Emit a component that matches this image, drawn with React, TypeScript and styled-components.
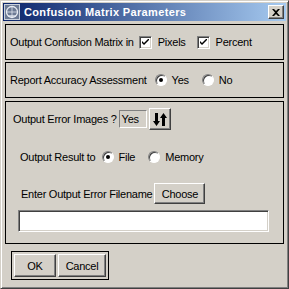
import styled, { createGlobalStyle } from 'styled-components'

const GlobalStyle = createGlobalStyle`
  html, body {
    margin: 0;
    padding: 0;
    background: #d4d0c8;
  }
  * {
    box-sizing: border-box;
  }
`;

// Outer window with the classic raised frame
const Window = styled.div`
  width: 289px;
  height: 289px;
  background: #d4d0c8;
  border-top: 1px solid #d4d0c8;
  border-left: 1px solid #d4d0c8;
  border-right: 1px solid #404040;
  border-bottom: 1px solid #404040;
  box-shadow: inset 1px 1px #ffffff, inset -1px -1px #808080;
  padding: 2px;
  display: flex;
  flex-direction: column;
  font-family: 'Liberation Sans', Arial, sans-serif;
  font-size: 11px;
  letter-spacing: -0.25px;
  color: #000;
`;

const TitleBar = styled.div`
  height: 18px;
  background: linear-gradient(to right, #0a246a, #a6caf0);
  display: flex;
  align-items: center;
  padding: 0 2px 0 1px;
  gap: 4px;
`;

const TitleText = styled.div`
  flex: 1;
  color: #fff;
  font-family: 'Liberation Sans', Tahoma, sans-serif;
  font-weight: bold;
  font-size: 11px;
  letter-spacing: 0.35px;
`;

const CloseButton = styled.div`
  width: 16px;
  height: 14px;
  background: #d4d0c8;
  border-top: 1px solid #fff;
  border-left: 1px solid #fff;
  border-right: 1px solid #404040;
  border-bottom: 1px solid #404040;
  box-shadow: inset -1px -1px #808080;
  display: flex;
  align-items: center;
  justify-content: center;
`;

const Content = styled.div`
  flex: 1;
  display: flex;
  flex-direction: column;
  padding: 3px 2px 0 2px;
`;

// Framed group of controls
const Panel = styled.div<{ $height: number; $gap?: number }>`
  height: ${(p) => p.$height}px;
  margin-bottom: ${(p) => p.$gap ?? 0}px;
  border: 1px solid #000;
  display: flex;
  flex-direction: column;
  justify-content: center;
  padding: 0 4px;
`;

const StackPanel = styled(Panel)`
  justify-content: flex-start;
  padding: 6px 7px 0 7px;
`;

const Row = styled.div<{ $indent?: number; $mt?: number }>`
  display: flex;
  align-items: center;
  margin-left: ${(p) => p.$indent ?? 0}px;
  margin-top: ${(p) => p.$mt ?? 0}px;
`;

const Label = styled.span<{ $mr?: number }>`
  white-space: nowrap;
  margin-right: ${(p) => p.$mr ?? 0}px;
`;

const CheckBox = styled.span`
  width: 13px;
  height: 13px;
  background: #fff;
  border-top: 1px solid #808080;
  border-left: 1px solid #808080;
  border-right: 1px solid #fff;
  border-bottom: 1px solid #fff;
  box-shadow: inset 1px 1px #404040, inset -1px -1px #d4d0c8;
  display: inline-flex;
  align-items: center;
  justify-content: center;
  margin-right: 6px;
`;

const Radio = styled.span`
  width: 12px;
  height: 12px;
  border-radius: 50%;
  background: #fff;
  border: 1px solid;
  border-color: #808080 #fff #fff #808080;
  box-shadow: inset 1px 1px #404040;
  display: inline-flex;
  align-items: center;
  justify-content: center;
  margin-right: 5px;
`;

const Dot = styled.span`
  width: 4px;
  height: 4px;
  border-radius: 50%;
  background: #000;
`;

const SunkenValue = styled.div`
  width: 28px;
  height: 18px;
  border-top: 1px solid #808080;
  border-left: 1px solid #808080;
  border-right: 1px solid #fff;
  border-bottom: 1px solid #fff;
  padding: 1px 0 0 2px;
  line-height: 14px;
  margin-right: 2px;
`;

const Button = styled.div<{ $w: number; $h: number }>`
  width: ${(p) => p.$w}px;
  height: ${(p) => p.$h}px;
  background: #d4d0c8;
  border-top: 1px solid #fff;
  border-left: 1px solid #fff;
  border-right: 1px solid #404040;
  border-bottom: 1px solid #404040;
  box-shadow: inset -1px -1px #808080;
  display: flex;
  align-items: center;
  justify-content: center;
  white-space: nowrap;
`;

const TextField = styled.div`
  height: 22px;
  margin: 6px 7px 0 5px;
  background: #fff;
  border-top: 1px solid #808080;
  border-left: 1px solid #808080;
  border-right: 1px solid #fff;
  border-bottom: 1px solid #fff;
  box-shadow: inset 1px 1px #404040, inset -1px -1px #d4d0c8;
`;

const ButtonGroup = styled.div`
  align-self: flex-start;
  margin: 7px 0 0 6px;
  border: 1px solid #000;
  padding: 2px 2px;
  display: flex;
  gap: 2px;
`;

const Check = () => (
  <svg width="7" height="7" viewBox="0 0 7 7">
    <path d="M0 2 L0 4 L2 6 L7 1 L7 -1 L2 4 Z" fill="#000" />
  </svg>
);

const Checked = () => (
  <CheckBox>
    <Check />
  </CheckBox>
);

const App = () => {
  return (
    <>
      <GlobalStyle />
      <Window>
        <TitleBar>
          <svg width="16" height="16" viewBox="0 0 16 16">
            <rect x="0.5" y="0.5" width="15" height="15" fill="#6c7a94" stroke="#c8d0dc" />
            <circle cx="8" cy="8" r="5.5" fill="none" stroke="#e8ecf4" strokeWidth="1.3" />
            <path d="M3 8 L13 8 M8 3 L8 13" stroke="#dfe4ee" strokeWidth="0.8" />
            <path d="M4 12 L12 12" stroke="#e8ecf4" strokeWidth="1.3" />
          </svg>
          <TitleText>Confusion Matrix Parameters</TitleText>
          <CloseButton>
            <svg width="8" height="7" viewBox="0 0 8 7">
              <path d="M0 0 L2 0 L4 2 L6 0 L8 0 L5 3.5 L8 7 L6 7 L4 5 L2 7 L0 7 L3 3.5 Z" fill="#000" />
            </svg>
          </CloseButton>
        </TitleBar>
        <Content>
          <Panel $height={36} $gap={2}>
            <Row>
              <Label $mr={5}>Output Confusion Matrix in</Label>
              <Checked />
              <Label $mr={11}>Pixels</Label>
              <Checked />
              <Label>Percent</Label>
            </Row>
          </Panel>
          <Panel $height={36} $gap={3}>
            <Row>
              <Label $mr={8}>Report Accuracy Assessment</Label>
              <Radio>
                <Dot />
              </Radio>
              <Label $mr={13}>Yes</Label>
              <Radio />
              <Label>No</Label>
            </Row>
          </Panel>
          <StackPanel $height={143}>
            <Row>
              <Label $mr={2}>Output Error Images ?</Label>
              <SunkenValue>Yes</SunkenValue>
              <Button $w={22} $h={22}>
                <svg width="14" height="13" viewBox="0 0 14 13">
                  <path d="M2 0 H5 V8 H7 L3.5 13 L0 8 H2 Z" fill="#000" />
                  <path d="M9 13 H12 V5 H14 L10.5 0 L7 5 H9 Z" fill="#000" />
                </svg>
              </Button>
            </Row>
            <Row $indent={7} $mt={21}>
              <Label $mr={6}>Output Result to</Label>
              <Radio>
                <Dot />
              </Radio>
              <Label $mr={13}>File</Label>
              <Radio />
              <Label>Memory</Label>
            </Row>
            <Row $indent={8} $mt={20}>
              <Label $mr={2}>Enter Output Error Filename</Label>
              <Button $w={51} $h={21}>Choose</Button>
            </Row>
            <TextField />
          </StackPanel>
          <ButtonGroup>
            <Button $w={42} $h={23}>OK</Button>
            <Button $w={48} $h={23}>Cancel</Button>
          </ButtonGroup>
        </Content>
      </Window>
    </>
  );
};

export default App
